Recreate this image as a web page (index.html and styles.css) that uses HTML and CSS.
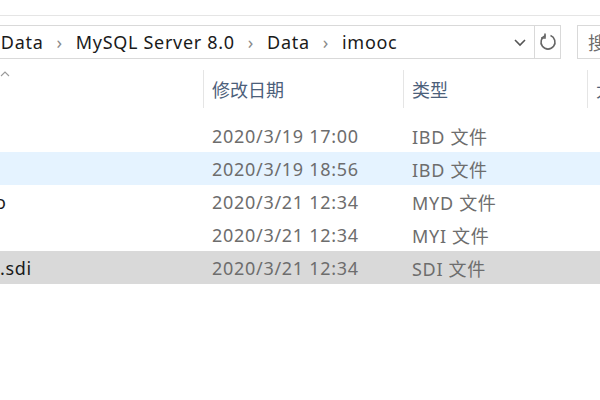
FILE: index.html
```html
<!DOCTYPE html>
<html>
<head>
<meta charset="utf-8">
<link rel="stylesheet" href="styles.css">
</head>
<body>
<div class="window">
  <div class="topbar"></div>
  <div class="toolbar">
    <div class="address">
      <div class="crumbs">
        <span class="crumb first">ProgramData</span>
        <span class="sep">›</span>
        <span class="crumb">MySQL Server 8.0</span>
        <span class="sep">›</span>
        <span class="crumb">Data</span>
        <span class="sep">›</span>
        <span class="crumb">imooc</span>
      </div>
      <div class="dropdown">
        <svg width="14" height="10" viewBox="0 0 14 10"><path d="M2 3 L7 8 L12 3" fill="none" stroke="#555" stroke-width="1.6"/></svg>
      </div>
      <div class="refresh">
        <svg width="20" height="20" viewBox="0 0 20 20"><path d="M12.5 3.6 A7 7 0 1 1 7.5 3.6" fill="none" stroke="#666" stroke-width="1.6"/><path d="M7 1.5 L7 6 L3 6" fill="none" stroke="#666" stroke-width="1.6"/></svg>
      </div>
    </div>
    <div class="search">搜索</div>
  </div>
  <div class="header">
    <div class="col name"><svg class="sort" width="10" height="7" viewBox="0 0 10 7"><path d="M1 6 L5 2 L9 6" fill="none" stroke="#9a9a9a" stroke-width="1.1"/></svg></div>
    <div class="col date">修改日期</div>
    <div class="col type">类型</div>
    <div class="col size">大小</div>
  </div>
  <div class="rows">
    <div class="row">
      <div class="col name"></div>
      <div class="col date">2020/3/19 17:00</div>
      <div class="col type">IBD 文件</div>
    </div>
    <div class="row hover">
      <div class="col name"></div>
      <div class="col date">2020/3/19 18:56</div>
      <div class="col type">IBD 文件</div>
    </div>
    <div class="row">
      <div class="col name"><span class="fname o">o</span></div>
      <div class="col date">2020/3/21 12:34</div>
      <div class="col type">MYD 文件</div>
    </div>
    <div class="row">
      <div class="col name"></div>
      <div class="col date">2020/3/21 12:34</div>
      <div class="col type">MYI 文件</div>
    </div>
    <div class="row selected">
      <div class="col name"><span class="fname">.sdi</span></div>
      <div class="col date">2020/3/21 12:34</div>
      <div class="col type">SDI 文件</div>
    </div>
  </div>
</div>
</body>
</html>
```
FILE: styles.css
```css
html, body {
  margin: 0;
  padding: 0;
  background: #ffffff;
}
body {
  width: 600px;
  height: 400px;
  overflow: hidden;
  font-family: "Noto Sans", "Noto Sans CJK SC", sans-serif;
  font-size: 18px;
  letter-spacing: 0.7px;
}
.window {
  width: 600px;
  overflow: hidden;
}
.topbar {
  height: 15px;
  border-bottom: 1px solid #e5e5e5;
}
.toolbar {
  display: flex;
  align-items: stretch;
  margin-top: 9px;
  height: 34px;
}
.address {
  display: flex;
  align-items: stretch;
  width: 600px;
  margin-left: -39px;
  flex: none;
  border: 1px solid #d9d9d9;
  box-sizing: border-box;
}
.crumbs {
  flex: 1;
  display: flex;
  align-items: center;
  white-space: nowrap;
  color: #1a1a1a;
}
.crumb.first {
  margin-left: -40px;
}
.sep {
  color: #8a8a8a;
  margin: 0 13px;
}
.dropdown {
  width: 28px;
  display: flex;
  align-items: center;
  justify-content: center;
}
.refresh {
  width: 25px;
  border-left: 1px solid #d9d9d9;
  display: flex;
  align-items: center;
  justify-content: center;
}
.search {
  margin-left: 16px;
  flex: none;
  width: 100px;
  border: 1px solid #d9d9d9;
  box-sizing: border-box;
  padding-left: 10px;
  display: flex;
  align-items: center;
  color: #6d6d6d;
}
.header {
  display: flex;
  margin-top: 11px;
  height: 38px;
}
.header .col {
  display: flex;
  align-items: center;
  color: #4c607a;
  box-sizing: border-box;
}
.col.name {
  width: 203px;
  flex: none;
}
.col.date {
  width: 200px;
  flex: none;
  padding-left: 9px;
  box-sizing: border-box;
}
.col.type {
  width: 184px;
  flex: none;
  padding-left: 9px;
  box-sizing: border-box;
}
.col.size {
  flex: none;
  width: 100px;
  padding-left: 9px;
  box-sizing: border-box;
}
.header .col.date,
.header .col.type,
.header .col.size {
  border-left: 1px solid #e5e5e5;
  padding-left: 8px;
  letter-spacing: 0;
}
.sort {
  align-self: flex-start;
  margin-top: 0px;
  margin-left: 0px;
}
.rows {
  margin-top: 11px;
}
.row {
  display: flex;
  height: 33px;
  align-items: center;
}
.row .col {
  color: #6d6d6d;
}
.row.hover {
  background: #e5f3ff;
}
.row.selected {
  background: #d9d9d9;
}
.fname {
  color: #1a1a1a;
}
.fname.o {
  margin-left: -5px;
}
```
